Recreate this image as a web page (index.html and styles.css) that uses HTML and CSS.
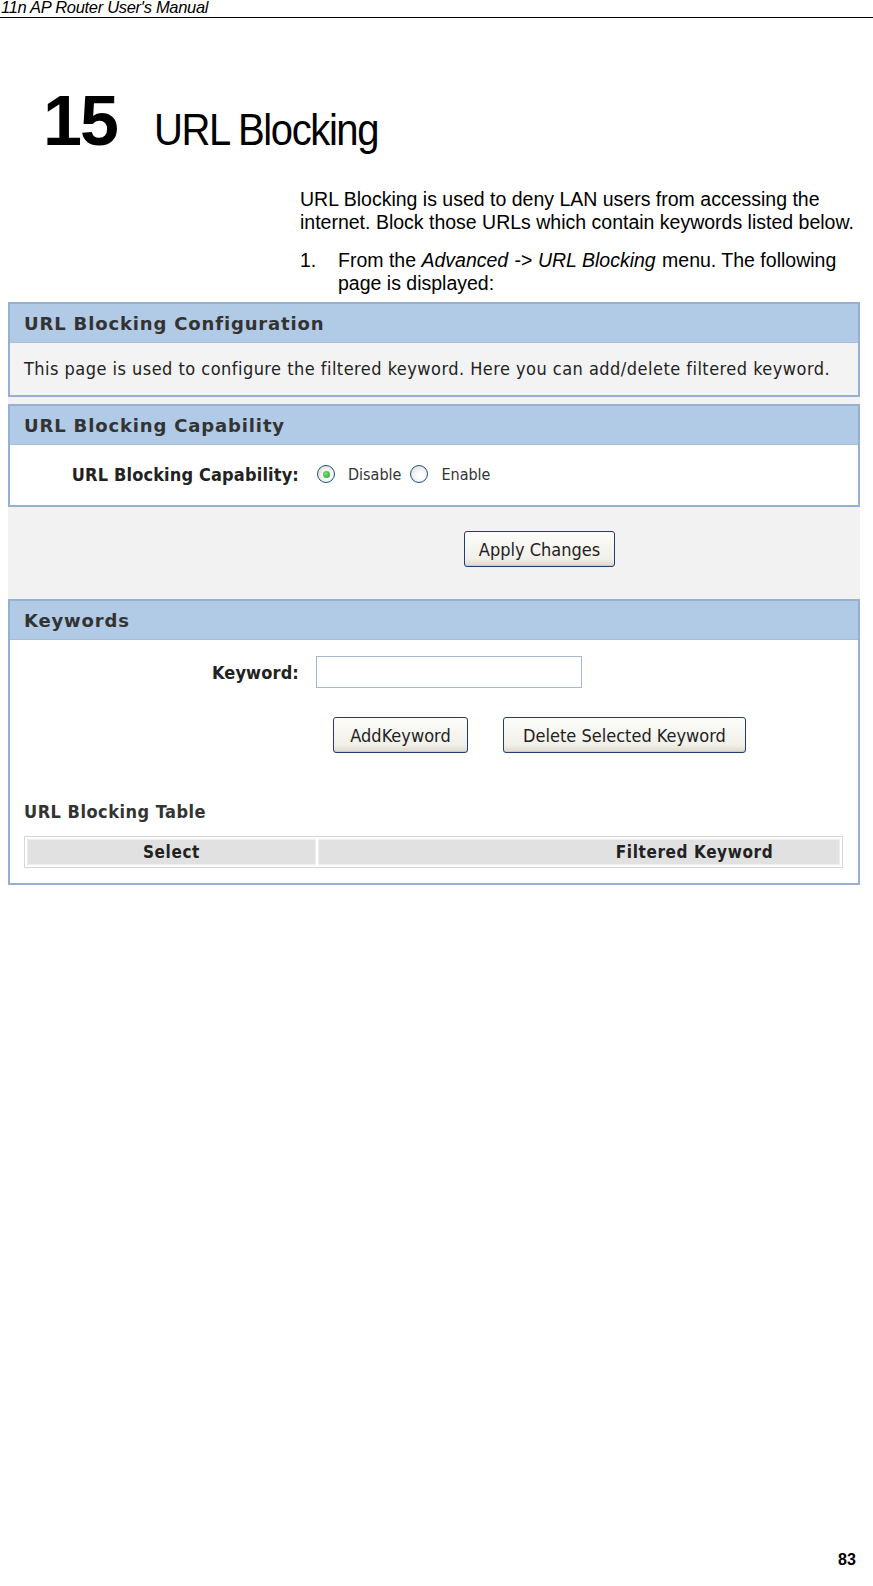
FILE: index.html
```html
<!DOCTYPE html>
<html lang="en">
  <head>
    <meta charset="UTF-8" />
    <meta name="viewport" content="width=device-width, initial-scale=1.0" />
    <title>11n AP Router User's Manual - URL Blocking</title>
    <link rel="stylesheet" href="styles.css">
  </head>
  <body>
    <div class="page">
      <!-- Cabecera del manual -->
      <div class="running-head">11n AP Router User's Manual</div>

      <h1 class="chapter">
        <span class="chapter-num">15</span>
        <span class="chapter-title">URL Blocking</span>
      </h1>

      <div class="intro">
        <p>URL Blocking is used to deny LAN users from accessing the internet. Block those URLs which contain keywords listed below.</p>
        <ol class="steps">
          <li><span class="step-num">1.</span><span class="step-text">From the <em>Advanced</em> -&gt; <em>URL Blocking</em> menu. The following page is displayed:</span></li>
        </ol>
      </div>

      <!-- Captura de la pagina del router -->
      <div class="screen">
        <div class="panel">
          <div class="panel-head">URL Blocking Configuration</div>
          <div class="panel-body gray">
            This page is used to configure the filtered keyword. Here you can add/delete filtered keyword.
          </div>
        </div>

        <div class="panel capability">
          <div class="panel-head">URL Blocking Capability</div>
          <div class="panel-body">
            <div class="field">
              <span class="field-label">URL Blocking Capability:</span>
              <span class="radio checked"></span>
              <span class="radio-text">Disable</span>
              <span class="radio"></span>
              <span class="radio-text">Enable</span>
            </div>
          </div>
        </div>

        <div class="apply-row">
          <button class="xp-btn apply">Apply Changes</button>
        </div>

        <div class="panel keywords">
          <div class="panel-head">Keywords</div>
          <div class="panel-body">
            <div class="field">
              <span class="field-label">Keyword:</span>
              <input type="text" class="keyword-input" />
            </div>
            <div class="btn-row">
              <button class="xp-btn add">AddKeyword</button>
              <button class="xp-btn del">Delete Selected Keyword</button>
            </div>
            <div class="table-title">URL Blocking Table</div>
            <table class="block-table">
              <tr>
                <th class="col-select">Select</th>
                <th class="col-keyword">Filtered Keyword</th>
              </tr>
            </table>
          </div>
        </div>
      </div>

      <div class="page-num">83</div>
    </div>
  </body>
</html>
```

FILE: styles.css
```css
* {
  margin: 0;
  padding: 0;
  box-sizing: border-box;
}

body {
  font-family: "Liberation Sans", Arial, sans-serif;
  color: #000;
  background-color: #fff;
}

.page {
  width: 873px;
  height: 1586px;
  position: relative;
}

.running-head {
  font-style: italic;
  font-size: 16.5px;
  line-height: 15px;
  height: 18px;
  letter-spacing: -0.3px;
  border-bottom: 1px solid #000;
  padding-left: 1px;
}

.chapter {
  display: flex;
  align-items: baseline;
  margin-top: 63px;
  height: 80px;
  font-weight: normal;
}

.chapter-num {
  font-size: 70px;
  font-weight: bold;
  margin-left: 43px;
  letter-spacing: -2px;
}

.chapter-title {
  display: inline-block;
  font-size: 45px;
  margin-left: 37px;
  letter-spacing: -1.6px;
  transform: scaleX(0.89);
  transform-origin: left bottom;
}

.intro {
  margin-left: 300px;
  margin-top: 27px;
  width: 570px;
  font-size: 19.5px;
  line-height: 23px;
}

.intro p {
  margin-bottom: 15px;
}

.intro em {
  padding-right: 1px;
}

.steps {
  list-style: none;
}

.steps li {
  display: flex;
}

.step-num {
  flex: 0 0 38px;
}

/* captura del router */
.screen {
  margin: 7px 13px 0 8px;
  background-color: #f2f2f2;
  font-family: "DejaVu Sans Condensed", "DejaVu Sans", sans-serif;
  color: #222;
}

.panel {
  border: 2px solid #97b0d2;
  background-color: #fff;
}

.panel + .panel {
  margin-top: 7px;
}

.panel-head {
  background-color: #b1cae6;
  height: 39px;
  line-height: 39px;
  padding-left: 14px;
  font-family: "DejaVu Sans", sans-serif;
  font-size: 18px;
  font-weight: bold;
  letter-spacing: 0.85px;
  color: #333;
  border-bottom: 1px solid #a7bfdc;
}

.panel-body {
  font-size: 17px;
}

.panel-body.gray {
  background-color: #f3f3f3;
  height: 52px;
  line-height: 51px;
  padding-left: 14px;
  font-size: 18px;
  letter-spacing: 0.47px;
}

.field {
  display: flex;
  align-items: center;
}

.field-label {
  width: 289px;
  text-align: right;
  font-weight: bold;
  font-size: 18px;
  letter-spacing: 0.15px;
  color: #222;
}

.capability .panel-body {
  height: 60px;
}

.capability .field {
  height: 60px;
  padding-bottom: 2px;
}

.capability .field-label {
  margin-right: 18px;
}

.radio {
  width: 18px;
  height: 18px;
  border-radius: 50%;
  border: 1px solid #1d5281;
  background: radial-gradient(circle at 60% 60%, #ffffff 20%, #d7d7cf 100%);
  position: relative;
  display: inline-block;
}

.radio.checked::after {
  content: "";
  position: absolute;
  left: 4.5px;
  top: 4.5px;
  width: 7px;
  height: 7px;
  border-radius: 50%;
  background: radial-gradient(circle at 40% 40%, #7ce07c, #21a121);
}

.radio-text {
  font-size: 16px;
  margin: 0 9px 0 13px;
  color: #333;
}

.apply-row {
  height: 92px;
  padding: 24px 0 0 456px;
}

.xp-btn {
  font-family: "DejaVu Sans Condensed", "DejaVu Sans", sans-serif;
  font-size: 18px;
  color: #222;
  height: 36px;
  border: 1px solid #1f3f74;
  border-radius: 3px;
  background: linear-gradient(#fdfdfb, #f0efe8 80%, #dcd9cc);
  box-shadow: inset 0 -1px 0 #cfcbbd;
  padding: 0 10px;
}

.apply {
  width: 151px;
}

.keywords .panel-body {
  height: 243px;
  padding-top: 16px;
}

.keywords .field-label {
  margin-right: 17px;
}

.keyword-input {
  width: 266px;
  height: 32px;
  border: 1px solid #a5b9d6;
  background-color: #fff;
}

.btn-row {
  display: flex;
  gap: 35px;
  margin: 29px 0 0 323px;
}

.add {
  width: 135px;
}

.del {
  width: 243px;
}

.table-title {
  font-size: 18px;
  font-weight: bold;
  letter-spacing: 0.5px;
  color: #333;
  margin: 48px 0 0 14px;
}

.block-table {
  margin: 14px 0 0 14px;
  width: 819px;
  border: 1px solid #d8d8d8;
  border-spacing: 2px;
  background-color: #fff;
}

.block-table th {
  background-color: #e1e1e1;
  font-size: 17px;
  letter-spacing: 0.6px;
  color: #222;
  height: 26px;
  border: 1px solid #eeeeee;
}

.col-select {
  width: 289px;
}

.col-keyword {
  padding-left: 231px;
}

.page-num {
  position: absolute;
  left: 838px;
  top: 1551px;
  font-weight: bold;
  font-size: 16px;
}
```
